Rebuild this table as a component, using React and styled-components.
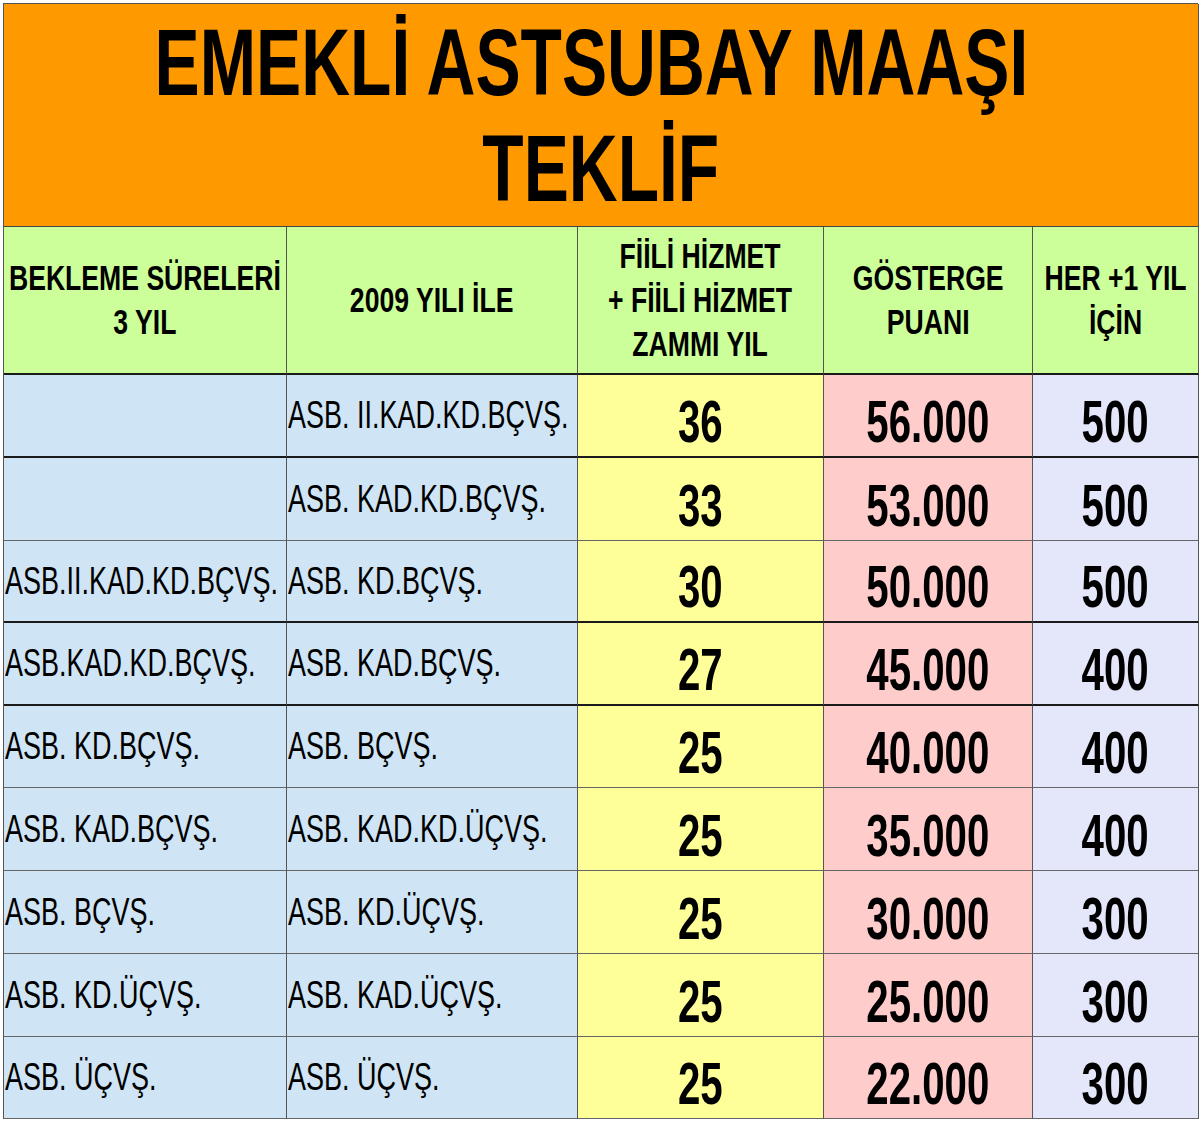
import React from "react";
import styled, { createGlobalStyle } from "styled-components";

const Global = createGlobalStyle`
  html, body { margin: 0; padding: 0; background: #ffffff; }
  body { font-family: "Liberation Sans", Arial, sans-serif; color: #000; }
`;

const Page = styled.div`
  padding: 3px 2px 7px 3px;
  background: #ffffff;
`;

const Table = styled.div`
  display: grid;
  grid-template-columns: 283px 291px 246px 209px 166px;
  grid-template-rows: 223px 148px 83px 83px 82px 83px 82px 83px 83px 83px 82px;
  border-left: 1px solid #555;
  border-top: 1px solid #555;
  width: 1195px;
  box-sizing: border-box;
`;

const TitleCell = styled.div`
  grid-column: 1 / -1;
  background: #ff9900;
  border-right: 1px solid #555;
  border-bottom: 1px solid #444;
  display: flex;
  align-items: center;
  justify-content: center;
  padding-top: 2px;
  box-sizing: border-box;
  overflow: hidden;
`;

const Cell = styled.div`
  background: ${(p) => p.$bg};
  border-right: 1px solid #555;
  border-bottom: ${(p) => (p.$strong ? "2px solid #1a1a1a" : "1px solid #666")};
  box-sizing: border-box;
  display: flex;
  align-items: ${(p) => p.$valign || "center"};
  justify-content: ${(p) => (p.$left ? "flex-start" : "center")};
  padding-left: ${(p) => (p.$left ? "1px" : "0")};
  min-width: 0;
  overflow: visible;
`;

const Squeeze = styled.span`
  display: inline-block;
  white-space: nowrap;
  font-size: ${(p) => p.$size}px;
  font-weight: ${(p) => (p.$bold ? 700 : 400)};
  line-height: ${(p) => p.$lh || "normal"};
  text-align: ${(p) => (p.$left ? "left" : "center")};
  transform: scaleX(${(p) => p.$scale});
  transform-origin: ${(p) => (p.$left ? "left center" : "center center")};
  color: #000;
`;

const HEAD_BG = "#ccff99";
const BLUE = "#cfe4f4";
const YELLOW = "#ffff99";
const PINK = "#ffcccc";
const LAVENDER = "#e4e6fa";

const headers = [
  ["BEKLEME SÜRELERİ", "3 YIL"],
  ["2009 YILI İLE"],
  ["FİİLİ HİZMET", "+ FİİLİ HİZMET", "ZAMMI YIL"],
  ["GÖSTERGE", "PUANI"],
  ["HER +1 YIL", "İÇİN"],
];

const rows = [
  ["", "ASB. II.KAD.KD.BÇVŞ.", "36", "56.000", "500", true],
  ["", "ASB. KAD.KD.BÇVŞ.", "33", "53.000", "500", false],
  ["ASB.II.KAD.KD.BÇVŞ.", "ASB. KD.BÇVŞ.", "30", "50.000", "500", true],
  ["ASB.KAD.KD.BÇVŞ.", "ASB. KAD.BÇVŞ.", "27", "45.000", "400", true],
  ["ASB. KD.BÇVŞ.", "ASB. BÇVŞ.", "25", "40.000", "400", false],
  ["ASB. KAD.BÇVŞ.", "ASB. KAD.KD.ÜÇVŞ.", "25", "35.000", "400", false],
  ["ASB. BÇVŞ.", "ASB. KD.ÜÇVŞ.", "25", "30.000", "300", false],
  ["ASB. KD.ÜÇVŞ.", "ASB. KAD.ÜÇVŞ.", "25", "25.000", "300", false],
  ["ASB. ÜÇVŞ.", "ASB. ÜÇVŞ.", "25", "22.000", "300", false],
];

function Lines({ lines }) {
  return lines.map((l, i) => (
    <React.Fragment key={i}>
      {i > 0 && <br />}
      {l}
    </React.Fragment>
  ));
}

export default function App() {
  return (
    <>
      <Global />
      <Page>
        <Table>
          <TitleCell>
            <Squeeze $size={94} $bold $lh="106px" $scale={0.72}>
              {"EMEKLİ ASTSUBAY MAAŞI\u00a0"}
              <br />
              TEKLİF
            </Squeeze>
          </TitleCell>
          {headers.map((h, i) => (
            <Cell key={"h" + i} $bg={HEAD_BG} $strong>
              <Squeeze $size={35} $bold $lh="44px" $scale={0.76}>
                <Lines lines={h} />
              </Squeeze>
            </Cell>
          ))}
          {rows.map((r, i) => (
            <React.Fragment key={"r" + i}>
              <Cell $bg={BLUE} $left $strong={r[5]}>
                <Squeeze $size={38} $left $scale={0.71}>
                  {r[0]}
                </Squeeze>
              </Cell>
              <Cell $bg={BLUE} $left $strong={r[5]}>
                <Squeeze $size={38} $left $scale={0.71}>
                  {r[1]}
                </Squeeze>
              </Cell>
              <Cell $bg={YELLOW} $valign="flex-end" $strong={r[5]}>
                <Squeeze $size={60} $bold $scale={0.67}>
                  {r[2]}
                </Squeeze>
              </Cell>
              <Cell $bg={PINK} $valign="flex-end" $strong={r[5]}>
                <Squeeze $size={60} $bold $scale={0.67}>
                  {r[3]}
                </Squeeze>
              </Cell>
              <Cell $bg={LAVENDER} $valign="flex-end" $strong={r[5]}>
                <Squeeze $size={60} $bold $scale={0.67}>
                  {r[4]}
                </Squeeze>
              </Cell>
            </React.Fragment>
          ))}
        </Table>
      </Page>
    </>
  );
}
